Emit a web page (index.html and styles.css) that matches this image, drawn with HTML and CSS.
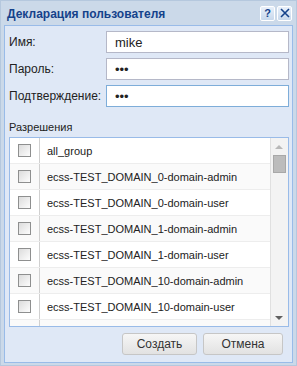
FILE: index.html
```html
<!DOCTYPE html>
<html lang="ru">
<head>
    <meta charset="UTF-8">
    <meta name="viewport" content="width=device-width, initial-scale=1.0">
    <title>Декларация пользователя</title>
    <link rel="stylesheet" href="styles.css">
</head>
<body>
    <div class="window">
        <div class="header">
            <span class="title">Декларация пользователя</span>
            <div class="tools">
                <span class="tool">?</span>
                <span class="tool">
                    <svg width="10" height="10" viewBox="0 0 10 10"><path d="M1 1 L9 9 M9 1 L1 9" stroke="#15428b" stroke-width="1.6"/></svg>
                </span>
            </div>
        </div>
        <div class="body">
            <div class="field">
                <label>Имя:</label>
                <input type="text" value="mike">
            </div>
            <div class="field">
                <label>Пароль:</label>
                <input type="password" value="abc">
            </div>
            <div class="field">
                <label>Подтверждение:</label>
                <input type="password" value="abc" class="focus">
            </div>

            <div class="section-label">Разрешения</div>
            <div class="grid">
                <div class="rows" id="rows"></div>
                <div class="scrollbar">
                    <span class="arrow up"></span>
                    <span class="thumb"></span>
                    <span class="arrow down"></span>
                </div>
            </div>

            <div class="buttons">
                <button class="btn"><span>Создать</span></button>
                <button class="btn wide"><span>Отмена</span></button>
            </div>
        </div>
    </div>

    <script>
      const groups = [
          "all_group",
          "ecss-TEST_DOMAIN_0-domain-admin",
          "ecss-TEST_DOMAIN_0-domain-user",
          "ecss-TEST_DOMAIN_1-domain-admin",
          "ecss-TEST_DOMAIN_1-domain-user",
          "ecss-TEST_DOMAIN_10-domain-admin",
          "ecss-TEST_DOMAIN_10-domain-user",
          "ecss-TEST_DOMAIN_100-domain-admin"
      ];

      document.getElementById("rows").innerHTML = groups.map(g => `<div class="row">
          <div class="check"><span class="box"></span></div>
          <div class="name">${g}</div>
      </div>`).join('');
    </script>
</body>
</html>
```

FILE: styles.css
```css
body {
    margin: 0;
    font-family: "Liberation Sans", Arial, sans-serif;
}
.window {
    width: 297px;
    height: 366px;
    box-sizing: border-box;
    background-color: #cbd9e9;
    border: 1px solid #b5c8de;
    display: flex;
    flex-direction: column;
}
.header {
    height: 24px;
    display: flex;
    align-items: center;
    justify-content: space-between;
    padding: 0 4px 0 6px;
}
.title {
    font-weight: bold;
    font-size: 12px;
    color: #15428b;
    margin-top: 1px;
}
.tools {
    display: flex;
    gap: 2px;
}
.tool {
    width: 13px;
    height: 13px;
    border: 1px solid #fff;
    border-radius: 2px;
    background: linear-gradient(#e8f0fa, #c8d8ec);
    display: flex;
    align-items: center;
    justify-content: center;
    font-weight: bold;
    font-size: 11px;
    color: #15428b;
}
.body {
    margin: 0 3px 2px 3px;
    height: 338px;
    box-sizing: border-box;
    border: 1px solid #99bbe8;
    background-color: #dfe8f6;
    padding: 5px 3px 0 4px;
    display: flex;
    flex-direction: column;
}
.field {
    display: flex;
    align-items: center;
    height: 22px;
    margin-bottom: 5px;
}
.field label {
    width: 97px;
    font-size: 12px;
    color: #222;
}
.field input {
    width: 183px;
    height: 22px;
    box-sizing: border-box;
    border: 1px solid #b5b8c8;
    background: #fff;
    padding: 0 8px;
    font-family: "Liberation Sans", Arial, sans-serif;
    font-size: 13px;
    color: #222;
    outline: none;
}
.field input.focus {
    border-color: #7eadd9;
}
.section-label {
    font-size: 11px;
    color: #222;
    margin-top: 9px;
    height: 14px;
}
.grid {
    margin-top: 2px;
    height: 190px;
    width: 280px;
    box-sizing: border-box;
    border: 1px solid #99bbe8;
    background: #fff;
    display: flex;
    overflow: hidden;
}
.rows {
    flex: 1;
    overflow: hidden;
}
.row {
    display: flex;
    height: 25px;
    border-bottom: 1px solid #ededed;
}
.row:nth-child(even) {
    background-color: #fafafa;
}
.check {
    width: 29px;
    border-right: 1px solid #d0d0d0;
    display: flex;
    align-items: center;
    justify-content: center;
}
.box {
    width: 11px;
    height: 11px;
    border: 1px solid #8e8f8f;
    background: linear-gradient(135deg, #dcdcdc, #fdfdfd);
}
.name {
    padding-left: 7px;
    display: flex;
    align-items: center;
    font-size: 11px;
    color: #222;
    white-space: nowrap;
}
.scrollbar {
    width: 17px;
    background: #f3f3f3;
    border-left: 1px solid #e0e0e0;
    position: relative;
}
.arrow {
    position: absolute;
    left: 4px;
    width: 0;
    height: 0;
    border-left: 4px solid transparent;
    border-right: 4px solid transparent;
}
.arrow.up {
    top: 7px;
    border-bottom: 4px solid #b8b8b8;
}
.arrow.down {
    bottom: 6px;
    border-top: 4px solid #606060;
}
.thumb {
    position: absolute;
    top: 17px;
    left: 2px;
    width: 11px;
    height: 16px;
    background: #bcbcbc;
    border: 1px solid #a8a8a8;
}
.buttons {
    display: flex;
    justify-content: flex-end;
    gap: 6px;
    margin-top: 6px;
    padding-right: 6px;
}
.btn {
    width: 75px;
    height: 22px;
    box-sizing: border-box;
    border: 1px solid #c6c6c6;
    border-radius: 3px;
    background: linear-gradient(#f6f6f6, #e2e2e2);
    font-family: "Liberation Sans", Arial, sans-serif;
    font-size: 12px;
    color: #333;
    padding: 0;
    display: flex;
    align-items: center;
    justify-content: center;
}
.btn.wide {
    width: 80px;
}
```
